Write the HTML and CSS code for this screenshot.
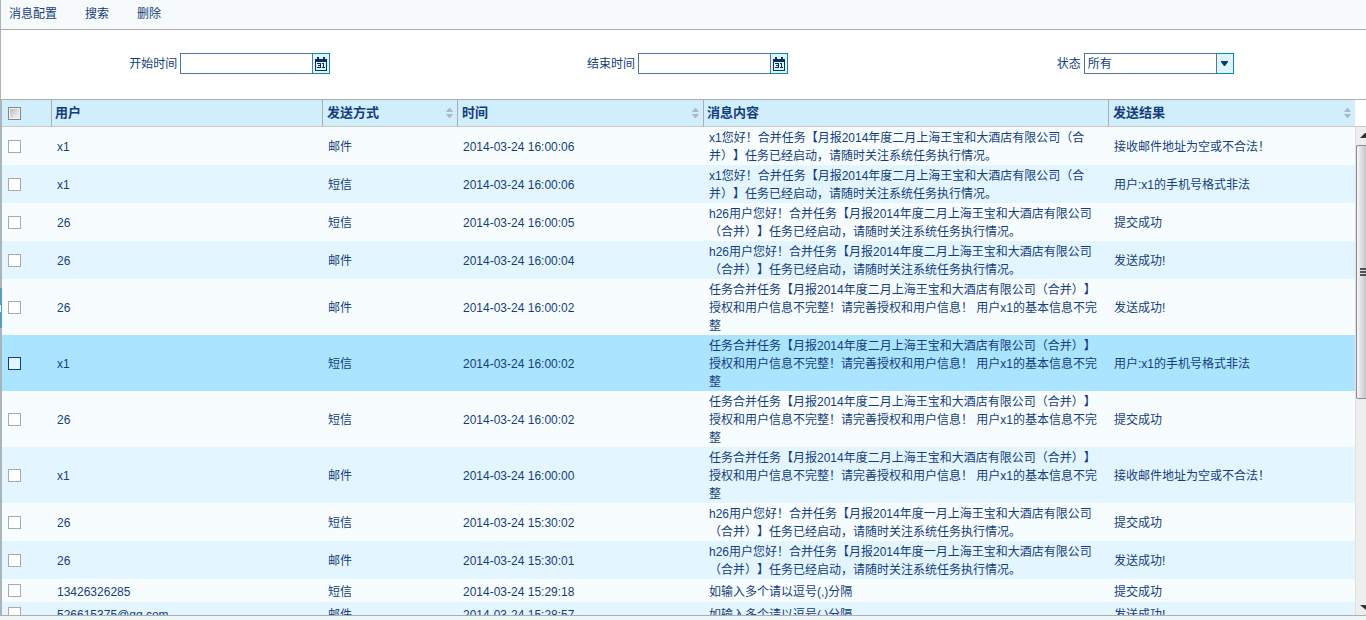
FILE: index.html
```html
<!DOCTYPE html>
<html lang="zh-CN">
<head>
<meta charset="utf-8">
<title>消息配置</title>
<link rel="stylesheet" href="styles.css">
</head>
<body>
<div class="page">
  <nav class="toolbar">
    <button type="button">消息配置</button>
    <button type="button">搜索</button>
    <button type="button">删除</button>
  </nav>
  <form class="filters">
    <div class="field">
      <label for="start">开始时间</label>
      <div class="combo"><input type="text" id="start"><button type="button" class="combo-btn" aria-label="选择开始时间"><svg width="12" height="14" viewBox="0 0 12 14" shape-rendering="crispEdges"><path d="M2 0h2v2h4V0h2v2h2v12H0V2h2zM1 5v8h10V5z" fill="#0b2f5c" fill-rule="evenodd"/><path d="M2 6h4v5H2v-1h3V9H3V8h2V7H2zM7 6h2v4h1v1H7v-1h1V7H7z" fill="#0b2f5c"/></svg></button></div>
    </div>
    <div class="field">
      <label for="end">结束时间</label>
      <div class="combo"><input type="text" id="end"><button type="button" class="combo-btn" aria-label="选择结束时间"><svg width="12" height="14" viewBox="0 0 12 14" shape-rendering="crispEdges"><path d="M2 0h2v2h4V0h2v2h2v12H0V2h2zM1 5v8h10V5z" fill="#0b2f5c" fill-rule="evenodd"/><path d="M2 6h4v5H2v-1h3V9H3V8h2V7H2zM7 6h2v4h1v1H7v-1h1V7H7z" fill="#0b2f5c"/></svg></button></div>
    </div>
    <div class="field">
      <label for="state">状态</label>
      <div class="combo"><select id="state"><option>所有</option></select><span class="combo-btn"><svg width="7" height="5" viewBox="0 0 7 5"><path d="M0 0h7v1L4 5H3L0 1z" fill="#003f70"/></svg></span></div>
    </div>
  </form>
  <main class="list">
    <div class="edge"><span class="handle"><span class="grip"></span></span></div>
    <div class="table-wrap">
      <table>
        <colgroup><col class="c-check"><col class="c-user"><col class="c-way"><col class="c-time"><col class="c-text"><col class="c-result"></colgroup>
        <thead>
          <tr>
            <th><input type="checkbox" class="all" aria-label="全选"></th>
            <th>用户</th>
            <th><div class="head">发送方式<svg class="sort" width="7" height="10" viewBox="0 0 7 10"><path d="M0 4h7L4 0H3zM0 6h7l-3 4H3z"/></svg></div></th>
            <th><div class="head">时间<svg class="sort" width="7" height="10" viewBox="0 0 7 10"><path d="M0 4h7L4 0H3zM0 6h7l-3 4H3z"/></svg></div></th>
            <th>消息内容</th>
            <th><div class="head">发送结果<svg class="sort" width="7" height="10" viewBox="0 0 7 10"><path d="M0 4h7L4 0H3zM0 6h7l-3 4H3z"/></svg></div></th>
          </tr>
        </thead>
        <tbody>
          <tr><td><input type="checkbox" aria-label="选择"></td><td>x1</td><td>邮件</td><td>2014-03-24 16:00:06</td><td>x1您好！合并任务【月报2014年度二月上海王宝和大酒店有限公司（合<br>并）】任务已经启动，请随时关注系统任务执行情况。</td><td>接收邮件地址为空或不合法！</td></tr>
          <tr><td><input type="checkbox" aria-label="选择"></td><td>x1</td><td>短信</td><td>2014-03-24 16:00:06</td><td>x1您好！合并任务【月报2014年度二月上海王宝和大酒店有限公司（合<br>并）】任务已经启动，请随时关注系统任务执行情况。</td><td>用户:x1的手机号格式非法</td></tr>
          <tr><td><input type="checkbox" aria-label="选择"></td><td>26</td><td>短信</td><td>2014-03-24 16:00:05</td><td>h26用户您好！合并任务【月报2014年度二月上海王宝和大酒店有限公司<br>（合并）】任务已经启动，请随时关注系统任务执行情况。</td><td>提交成功</td></tr>
          <tr><td><input type="checkbox" aria-label="选择"></td><td>26</td><td>邮件</td><td>2014-03-24 16:00:04</td><td>h26用户您好！合并任务【月报2014年度二月上海王宝和大酒店有限公司<br>（合并）】任务已经启动，请随时关注系统任务执行情况。</td><td>发送成功!</td></tr>
          <tr><td><input type="checkbox" aria-label="选择"></td><td>26</td><td>邮件</td><td>2014-03-24 16:00:02</td><td>任务合并任务【月报2014年度二月上海王宝和大酒店有限公司（合并）】<br>授权和用户信息不完整！请完善授权和用户信息！ 用户x1的基本信息不完<br>整</td><td>发送成功!</td></tr>
          <tr class="hover"><td><input type="checkbox" aria-label="选择"></td><td>x1</td><td>短信</td><td>2014-03-24 16:00:02</td><td>任务合并任务【月报2014年度二月上海王宝和大酒店有限公司（合并）】<br>授权和用户信息不完整！请完善授权和用户信息！ 用户x1的基本信息不完<br>整</td><td>用户:x1的手机号格式非法</td></tr>
          <tr><td><input type="checkbox" aria-label="选择"></td><td>26</td><td>短信</td><td>2014-03-24 16:00:02</td><td>任务合并任务【月报2014年度二月上海王宝和大酒店有限公司（合并）】<br>授权和用户信息不完整！请完善授权和用户信息！ 用户x1的基本信息不完<br>整</td><td>提交成功</td></tr>
          <tr><td><input type="checkbox" aria-label="选择"></td><td>x1</td><td>邮件</td><td>2014-03-24 16:00:00</td><td>任务合并任务【月报2014年度二月上海王宝和大酒店有限公司（合并）】<br>授权和用户信息不完整！请完善授权和用户信息！ 用户x1的基本信息不完<br>整</td><td>接收邮件地址为空或不合法！</td></tr>
          <tr><td><input type="checkbox" aria-label="选择"></td><td>26</td><td>短信</td><td>2014-03-24 15:30:02</td><td>h26用户您好！合并任务【月报2014年度一月上海王宝和大酒店有限公司<br>（合并）】任务已经启动，请随时关注系统任务执行情况。</td><td>提交成功</td></tr>
          <tr><td><input type="checkbox" aria-label="选择"></td><td>26</td><td>邮件</td><td>2014-03-24 15:30:01</td><td>h26用户您好！合并任务【月报2014年度一月上海王宝和大酒店有限公司<br>（合并）】任务已经启动，请随时关注系统任务执行情况。</td><td>发送成功!</td></tr>
          <tr><td><input type="checkbox" aria-label="选择"></td><td>13426326285</td><td>短信</td><td>2014-03-24 15:29:18</td><td>如输入多个请以逗号(,)分隔</td><td>提交成功</td></tr>
          <tr><td><input type="checkbox" aria-label="选择"></td><td>526615375@qq.com</td><td>邮件</td><td>2014-03-24 15:28:57</td><td>如输入多个请以逗号(,)分隔</td><td>发送成功!</td></tr>
        </tbody>
      </table>
    </div>
    <div class="side">
      <div class="side-head"></div>
      <div class="scroll">
        <svg width="10" height="18" viewBox="0 0 10 18"><path d="M4 11l5-5h1v5z" fill="#333"/></svg>
        <div class="thumb"><span></span><span></span><span></span></div>
        <svg class="down" width="10" height="12" viewBox="0 0 10 12"><path d="M4 2h6v5z" fill="#333"/></svg>
      </div>
    </div>
  </main>
  <footer class="foot"></footer>
</div>
</body>
</html>
```
FILE: styles.css
```css
* { box-sizing: border-box; }

body {
  margin: 0;
  font: 12px/18px "Liberation Sans", "Noto Sans CJK SC", sans-serif;
  color: #153d7b;
  background: #fff;
  text-spacing-trim: space-all;
}

button, input, select { font: inherit; color: inherit; margin: 0; padding: 0; border-radius: 0; }

.page { height: 100vh; display: flex; flex-direction: column; overflow: hidden; }

.toolbar {
  display: flex;
  gap: 28px;
  height: 30px;
  padding: 5px 8px 6px;
  background: #f6fafb;
  border-left: 1px solid #a9b4bb;
  border-bottom: 1px solid #adadad;
}
.toolbar button { border: 0; background: none; line-height: 18px; }

.filters {
  display: grid;
  grid-template-columns: repeat(3, 1fr);
  height: 69px;
  margin-right: -8px;
  padding-top: 23px;
  border-left: 1px solid #a9b4bb;
}
.field { display: flex; justify-content: center; gap: 3px; line-height: 23px; }
.combo { position: relative; display: flex; width: 150px; height: 21px; }
.combo input { flex: 1; min-width: 0; border: 1px solid #55759b; border-right: 0; background: #fff; }
.combo select { width: 100%; appearance: none; border: 1px solid #55759b; background: #fff; padding: 1px 0 0 3px; line-height: 18px; }
.combo-btn {
  display: flex;
  align-items: center;
  justify-content: center;
  width: 18px;
  border: 1px solid #0089b3;
  border-left-color: #55759b;
  background: #def5fd;
}
.combo select + .combo-btn { position: absolute; right: 0; top: 0; height: 100%; pointer-events: none; }

.list { flex: 1; min-height: 0; display: flex; overflow: hidden; border-top: 1px solid #adadad; }

.edge { flex: none; width: 2px; background: #a9b4bb; padding-top: 188px; }
.handle { display: block; height: 40px; padding-top: 17px; background: #559dc8; }
.grip { display: block; width: 1px; height: 7px; background: #e8f1f6; }

.table-wrap { flex: 1; min-width: 0; overflow: hidden; }
table { width: 100%; border-collapse: separate; border-spacing: 0; table-layout: fixed; }
.c-check { width: 50px; }
.c-user { width: 271px; }
.c-way { width: 135px; }
.c-time { width: 246px; }
.c-text { width: 405px; }

th {
  height: 27px;
  padding: 0 4px 0 3px;
  text-align: left;
  font-size: 13px;
  background: #d1eefd;
  border-right: 1px solid #adadad;
  border-bottom: 1px solid #ccc8c4;
}
th:last-child { border-right: 0; }
.head { display: flex; align-items: center; justify-content: space-between; padding-left: 1px; }
.sort { fill: #aab8ca; }

td { height: 23px; padding: 2px 4px 0 5px; white-space: nowrap; background: #f7fdff; vertical-align: middle; }
td:first-child, th:first-child { padding: 0 0 0 6px; }
tr:nth-child(even) td { background: #e3f6ff; }
tr.hover td { background: #aae4ff; }

input[type="checkbox"] {
  appearance: none;
  display: block;
  width: 13px;
  height: 13px;
  border: 1px solid #aaa;
  background: #fff;
}
.hover input[type="checkbox"] { border-color: #153d7b; background: #e0f7ff; }
input[type="checkbox"].all {
  border-color: #868686;
  background: linear-gradient(135deg, #b8bcc2, #f7f7f7) content-box, #f4f4f4;
  padding: 1px;
}

.side { flex: none; width: 11px; display: flex; flex-direction: column; }
.side-head { height: 27px; border-bottom: 1px solid #ccc8c4; }
.scroll {
  flex: 1;
  min-height: 0;
  display: flex;
  flex-direction: column;
  align-items: flex-end;
  background: #eee;
  border-left: 1px solid #e3e0e0;
}
.scroll svg { flex: none; }
.thumb {
  flex: none;
  display: flex;
  flex-direction: column;
  justify-content: center;
  gap: 1px;
  width: 10px;
  height: 52%;
  padding-left: 3px;
  border: 1px solid #8d8d8d;
  border-right: 0;
  border-radius: 2px 0 0 2px;
  background: linear-gradient(90deg, #f7f7f7, #c5c5cb);
}
.thumb span { height: 2px; background: #555; }
.down { margin-top: auto; }

.foot { flex: none; height: 5px; background: #f0f5f6; border-top: 1px solid #a9b0b1; }
```
